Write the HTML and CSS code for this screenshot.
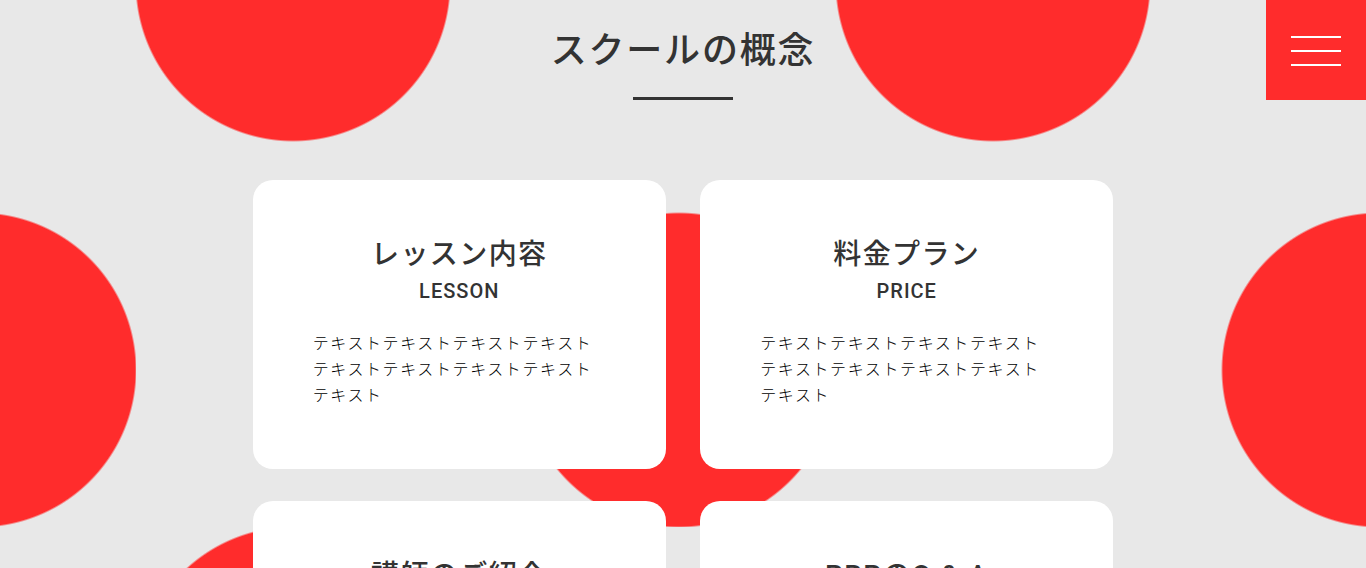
FILE: index.html
```html
<!DOCTYPE html>
<html lang="ja">
<head>
<meta charset="utf-8">
<meta name="viewport" content="width=device-width, initial-scale=1">
<title>スクールの概念</title>
<link rel="stylesheet" href="styles.css">
</head>
<body>
<button class="menu" type="button" aria-label="メニュー">
  <span class="menu-line"></span>
  <span class="menu-line"></span>
  <span class="menu-line"></span>
</button>
<main class="concept">
  <h2 class="concept-title">スクールの概念</h2>
  <div class="cards">
    <section class="card">
      <h3 class="card-title">レッスン内容</h3>
      <p class="card-sub">LESSON</p>
      <p class="card-text">テキストテキストテキストテキストテキストテキストテキストテキストテキスト</p>
    </section>
    <section class="card">
      <h3 class="card-title">料金プラン</h3>
      <p class="card-sub">PRICE</p>
      <p class="card-text">テキストテキストテキストテキストテキストテキストテキストテキストテキスト</p>
    </section>
    <section class="card">
      <h3 class="card-title">講師のご紹介</h3>
    </section>
    <section class="card">
      <h3 class="card-title">PRPのQ &amp; A</h3>
    </section>
  </div>
</main>
</body>
</html>
```
FILE: styles.css
```css
* {
  box-sizing: border-box;
  margin: 0;
  padding: 0;
}

html {
  height: 100%;
  overflow: hidden;
}

body {
  min-height: 100%;
  color: #333;
  background-color: #e8e8e8;
  /* two staggered dots in each 700px tile */
  background-image:
    radial-gradient(circle at 157px 157px, #ff2c2c 156px, transparent 158px),
    radial-gradient(circle at 543px 543px, #ff2c2c 156px, transparent 158px);
  background-size: 700px 700px;
  background-position: 136px 527px;
  font-family: Roboto, "Noto Sans CJK JP", sans-serif;
  font-size: 16px;
  font-weight: 300;
  line-height: 26px;
  letter-spacing: 0.1em;
}

.menu {
  position: fixed;
  top: 0;
  right: 0;
  z-index: 10;
  display: flex;
  flex-direction: column;
  align-items: center;
  justify-content: center;
  gap: 12px;
  width: 100px;
  height: 100px;
  padding-top: 2px;
  border: 0;
  background: #ff2c2c;
  cursor: pointer;
}

.menu-line {
  width: 50px;
  height: 2px;
  background: #fff;
}

.concept {
  width: 63%;
  margin: 0 auto;
  padding: 26px 0 80px;
}

.concept-title {
  display: flex;
  flex-direction: column;
  align-items: center;
  gap: 20px;
  margin-bottom: 80px;
  font-size: 36px;
  font-weight: 500;
  line-height: 51px;
  letter-spacing: 0.05em;
}

.concept-title::after {
  content: "";
  width: 100px;
  height: 3px;
  background: #333;
}

.cards {
  display: grid;
  grid-template-columns: 1fr 1fr;
  gap: 32px 4%;
}

.card {
  min-height: 289px;
  padding: 55px 60px 60px;
  border-radius: 20px;
  background: #fff;
}

.card-title {
  font-size: 28px;
  font-weight: 500;
  line-height: 40px;
  letter-spacing: 0.05em;
  text-align: center;
}

.card-sub {
  margin: 1px 0 25px;
  font-size: 20px;
  font-weight: 500;
  line-height: 30px;
  letter-spacing: 0.05em;
  text-align: center;
}

.card-text {
  color: #000;
  word-break: break-all;
}
```
